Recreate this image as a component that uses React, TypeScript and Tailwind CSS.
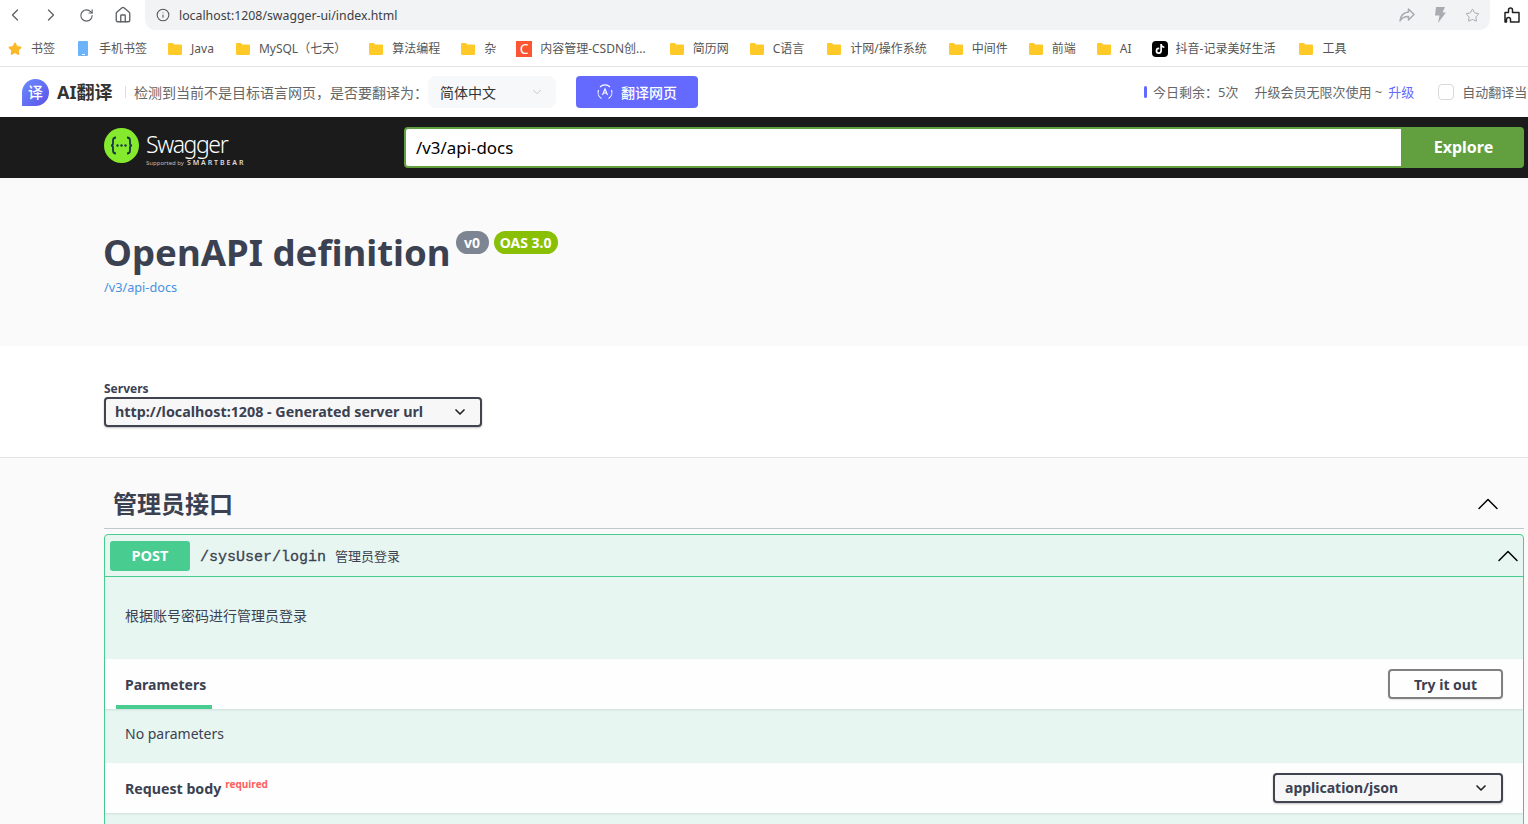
import React from 'react';
import { FaTiktok } from 'react-icons/fa';
import { ChevronDown, ChevronLeft, ChevronRight, ChevronUp, Home, Info, RotateCw, Star } from 'lucide-react';

const Folder = () => (
    <svg width="14" height="12" viewBox="0 0 14 12" className="shrink-0">
        <path d="M0 1.2C0 .5.5 0 1.2 0h3.6l1.5 1.6h6.5c.7 0 1.2.5 1.2 1.2v8c0 .7-.5 1.2-1.2 1.2H1.2C.5 12 0 11.500 0 10.800z" fill="#ffca28" />
    </svg>
);

const bookmarks = [
    { label: '书签', icon: <Star size={14} className="text-[#fbb829] fill-[#fbb829] shrink-0" />, cls: 'ml-[8px] gap-[9px]' },
    { label: '手机书签', icon: <div className="w-[10px] h-[15px] bg-[#6db3f9] rounded-[1px] shrink-0 mr-[2px] flex items-end justify-center"><div className="w-[3px] h-[1px] bg-white mb-[1px]" /></div>, cls: 'ml-[2px] gap-[9px]' },
    { label: 'Java', cls: 'gap-[9px]' },
    { label: 'MySQL（七天）', cls: 'ml-[1px] gap-[9px]' },
    { label: '算法编程', cls: 'gap-[9px] ml-[2px]' },
    { label: '杂', cls: 'gap-[9px]' },
    { label: '内容管理-CSDN创...', icon: <div className="w-[16px] h-[16px] bg-[#fc5531] text-white text-[14px] leading-[16px] text-center shrink-0">C</div>, cls: '-ml-[1px] gap-[8px]' },
    { label: '简历网', cls: 'ml-[3px] gap-[9px]' },
    { label: 'C语言', cls: 'gap-[9px]' },
    { label: '计网/操作系统', cls: 'ml-[2px] gap-[9px]' },
    { label: '中间件', cls: 'ml-[1px] gap-[9px]' },
    { label: '前端', cls: 'gap-[9px]' },
    { label: 'AI', cls: 'gap-[9px]' },
    { label: '抖音-记录美好生活', icon: <div className="w-[16px] h-[16px] bg-black rounded-[4px] flex items-center justify-center shrink-0"><FaTiktok className="text-white w-[10px] h-[10px]" /></div>, cls: '-ml-[1px] gap-[8px]' },
    { label: '工具', cls: 'ml-[3px] gap-[9px]' },
];

const SelectArrow = () => <ChevronDown size={16} strokeWidth={2.5} className="text-[#222] shrink-0" />;

const App = () => {
    return (
        <div className="h-[824px] overflow-hidden bg-white [font-family:'Noto_Sans','Noto_Sans_CJK_SC',sans-serif]">
            {/* Browser toolbar */}
            <div className="h-[30px] flex items-center text-[#5f6368]">
                <div className="w-[145px] flex items-center pl-[5px] gap-[12px] shrink-0">
                    <ChevronLeft size={20} strokeWidth={1.6} />
                    <ChevronRight size={20} strokeWidth={1.6} className="ml-[4px]" />
                    <RotateCw size={15} strokeWidth={1.8} className="ml-[6px]" />
                    <Home size={18} strokeWidth={1.8} className="ml-[8px]" />
                </div>
                <div className="w-[1345px] h-[30px] bg-[#f1f3f4] rounded-b-[10px] flex items-center pl-[11px] pr-[10px]">
                    <Info size={14} strokeWidth={1.8} className="text-[#555]" />
                    <span className="ml-[9px] mt-[2px] text-[12.3px] text-[#3c4043]">localhost:1208/swagger-ui/index.html</span>
                    <div className="ml-auto flex items-center text-[#a8abaf]">
                        <svg width="16" height="14" viewBox="0 0 16 14" fill="none" stroke="currentColor" strokeWidth="1.5"><path d="M9.500 1v3C4 4.500 1.500 8 1 13c1.800-3.400 4.500-4.500 8.500-4.500v3.500L15 6.500z" strokeLinejoin="round" /></svg>
                        <svg width="12" height="16" viewBox="0 0 12 16" fill="currentColor" className="ml-[19px]"><path d="M2 0h9L8.500 5.500H12L4 16l1.500-7.500H1z" /></svg>
                        <Star size={15} strokeWidth={1.6} className="ml-[19px]" />
                    </div>
                </div>
                <svg width="16" height="16" viewBox="0 0 16 16" fill="none" stroke="#222" strokeWidth="1.5" className="ml-[14px]"><path d="M1 5.500h3.500V3a2 2 0 0 1 4 0v2.500H15V15H6.500v-2.500a2 2 0 0 0-4 0V15H1z" strokeLinejoin="round" /></svg>
            </div>

            {/* Bookmarks */}
            <div className="h-[37px] pt-[1px] flex items-center gap-[21px] border-b border-[#e2e3e5] text-[12px] text-[#555] whitespace-nowrap">
                {bookmarks.map((b) => (
                    <div key={b.label} className={`flex items-center shrink-0 ${b.cls}`}>
                        {b.icon ?? <Folder />}
                        <span>{b.label}</span>
                    </div>
                ))}
            </div>

            {/* Translate bar */}
            <div className="h-[50px] flex items-center text-[13px] text-[#666] whitespace-nowrap overflow-hidden">
                <div className="ml-[22px] w-[27px] h-[27px] rounded-full rounded-bl-[6px] bg-gradient-to-br from-[#6d8cff] to-[#5a4fe8] text-white text-[15px] font-medium flex items-center justify-center shrink-0">译</div>
                <span className="ml-[8px] w-[55px] text-[18px] font-bold text-[#333] shrink-0">AI翻译</span>
                <div className="ml-[13px] w-px h-[12px] bg-[#ddd] shrink-0" />
                <span className="ml-[8px] mt-[1px] w-[285px] text-[14px] shrink-0">检测到当前不是目标语言网页，是否要翻译为：</span>
                <div className="ml-[9px] w-[128px] h-[32px] bg-[#f7f8fa] rounded-[8px] flex items-center pl-[12px] pr-[12px] text-[14px] text-[#333] shrink-0">
                    简体中文
                    <ChevronDown size={14} strokeWidth={1.4} className="ml-auto text-[#bbb]" />
                </div>
                <button className="ml-[20px] w-[122px] h-[32px] bg-[#6469ff] rounded-[4px] text-white text-[14px] font-medium flex items-center justify-center gap-[8px] shrink-0">
                    <svg width="16" height="16" viewBox="0 0 16 16" fill="none" stroke="#fff" strokeWidth="1.1"><path d="M3 3a7 7 0 0 1 10 0M14.500 6a7 7 0 0 1-3 8.500M4.500 14.500A7 7 0 0 1 1.500 6M5.500 11L8 5l2.500 6M6.500 9h3" /></svg>
                    翻译网页
                </button>
                <div className="ml-[446px] w-[3px] h-[12px] bg-[#6469ff] rounded-full shrink-0" />
                <span className="ml-[6px] mt-[1px] shrink-0">今日剩余：5次</span>
                <span className="ml-[16px] mt-[1px] shrink-0">升级会员无限次使用 ~</span>
                <span className="ml-[6px] mt-[1px] text-[#6469ff] shrink-0">升级</span>
                <div className="ml-[24px] w-[16px] h-[16px] rounded-[4px] border border-[#d9d9d9] shrink-0" />
                <span className="ml-[8px] mt-[1px] shrink-0">自动翻译当前网站</span>
            </div>

            {/* Swagger top bar */}
            <div className="h-[61px] bg-[#1b1b1b] flex items-center pl-[104px] pr-[4px]">
                <div className="w-[300px] h-[61px] pt-[11px] flex items-start gap-[7px] shrink-0">
                    <svg width="35" height="35" viewBox="0 0 35 35" className="shrink-0">
                        <circle cx="17.500" cy="17.500" r="17.500" fill="#85ea2d" />
                        <path d="M12 9.500c-2.500 0-3 1-3 3v3c0 1.300-.6 2-2 2 1.400 0 2 .7 2 2v3c0 2 .5 3 3 3M23 9.500c2.500 0 3 1 3 3v3c0 1.300.6 2 2 2-1.400 0-2 .7-2 2v3c0 2-.5 3-3 3" fill="none" stroke="#173647" strokeWidth="1.800" />
                        <circle cx="13.500" cy="17.500" r="1.200" fill="#173647" />
                        <circle cx="17.500" cy="17.500" r="1.200" fill="#173647" />
                        <circle cx="21.500" cy="17.500" r="1.200" fill="#173647" />
                    </svg>
                    <div className="flex flex-col text-white">
                        <span className="text-[23px] leading-[32px] font-light tracking-[-1.4px]">Swagger</span>
                        <div className="-mt-[2px] flex items-center gap-[3px] leading-[10px] whitespace-nowrap">
                            <span className="text-[6px] text-[#bbb]">Supported by</span>
                            <span className="text-[7px] font-semibold tracking-[1.9px] text-[#ddd]">SMARTBEAR</span>
                        </div>
                    </div>
                </div>
                <div className="flex-1 flex h-[41px]">
                    <div className="flex-1 bg-white border-2 border-[#62a03f] rounded-l-[4px] pl-[10px] flex items-center text-[16.9px] text-black">/v3/api-docs</div>
                    <button className="w-[121px] pb-[2px] bg-[#62a03f] rounded-r-[4px] text-white text-[16px] font-bold">Explore</button>
                </div>
            </div>

            {/* Info */}
            <div className="h-[168px] bg-[#fafafa] pl-[103px] pt-[49px] text-[#3b4151]">
                <div className="flex items-start">
                    <h1 className="text-[36.6px] leading-[50px] font-bold">OpenAPI definition</h1>
                    <span className="ml-[5px] mt-[4px] h-[23px] w-[33px] rounded-full bg-[#7d8492] text-white text-[14px] font-bold flex items-center justify-center">v0</span>
                    <span className="ml-[5px] mt-[4px] h-[23px] w-[64px] rounded-full bg-[#89bf04] text-white text-[14px] font-bold flex items-center justify-center">OAS 3.0</span>
                </div>
                <div className="mt-[1px] pl-[1px] text-[12.7px] leading-[18px] text-[#4990e2]">/v3/api-docs</div>
            </div>

            {/* Servers */}
            <div className="h-[112px] bg-white border-b border-[#e3e3e3] pl-[104px] pt-[35px] text-[#3b4151]">
                <div className="text-[12px] leading-[16px] font-bold">Servers</div>
                <div className="w-[378px] h-[30px] bg-[#f7f7f7] border-2 border-[#41444e] rounded-[4px] shadow-[0_1px_2px_rgba(0,0,0,0.25)] flex items-center pl-[9px] pr-[12px] pb-[1px] text-[14.3px] font-bold">
                    http://localhost:1208 - Generated server url
                    <span className="ml-auto"><SelectArrow /></span>
                </div>
            </div>

            {/* Tag section */}
            <div className="bg-[#fafafa] pl-[104px] pr-[4px] text-[#3b4151] h-full">
                <div className="h-[71px] flex items-center pl-[9px] pr-[18px] pt-[22px] border-b border-[#c5c6cb]">
                    <h3 className="text-[24px] font-bold">管理员接口</h3>
                    <ChevronUp size={36} strokeWidth={1} className="ml-auto text-black -my-[6px]" />
                </div>

                <div className="mt-[5px] border border-[#49cc90] rounded-[4px] bg-[#e7f6f0]">
                    <div className="h-[42px] flex items-center pl-[5px] border-b border-[#49cc90]">
                        <div className="w-[80px] h-[30px] bg-[#49cc90] rounded-[3px] text-white text-[14.5px] font-bold flex items-center justify-center">POST</div>
                        <span className="ml-[10px] mt-[6px] text-[15px] [-webkit-text-stroke:0.3px] [font-family:'Liberation_Mono',monospace]">/sysUser/login</span>
                        <span className="ml-[9px] mt-[2px] text-[13px]">管理员登录</span>
                        <ChevronUp size={36} strokeWidth={1} className="ml-auto -mr-[3px] text-black -my-[4px]" />
                    </div>

                    <div className="h-[82px] pl-[20px] pt-[29px] text-[14px] leading-[20px]">根据账号密码进行管理员登录</div>

                    <div className="h-[50px] flex items-end justify-between pl-[11px] pr-[20px] bg-[#fdfefd] shadow-[0_1px_2px_rgba(0,0,0,0.1)]">
                        <div className="w-[96px] h-[50px] border-b-4 border-[#49cc90] pl-[9px] pt-[16px] text-[14px] leading-[20px] font-bold">Parameters</div>
                        <button className="w-[115px] h-[30px] mb-[10px] border-2 border-[#808080] rounded-[4px] text-[14px] font-bold shadow-[0_1px_2px_rgba(0,0,0,0.1)]">Try it out</button>
                    </div>

                    <div className="h-[54px] pl-[20px] pb-[6px] flex items-center text-[14px]">No parameters</div>

                    <div className="h-[50px] flex items-center justify-between pl-[20px] pr-[20px] bg-[#fdfefd] shadow-[0_1px_2px_rgba(0,0,0,0.1)]">
                        <div className="flex items-start mt-[2px]">
                            <span className="text-[14.2px] font-bold">Request body</span>
                            <span className="ml-[4px] -mt-[1px] text-[10px] leading-[14px] font-bold text-[#ff6060]">required</span>
                        </div>
                        <div className="w-[230px] h-[30px] bg-[#f7f7f7] border-2 border-[#41444e] rounded-[4px] shadow-[0_1px_2px_rgba(0,0,0,0.25)] flex items-center pl-[10px] pr-[12px] pb-[1px] text-[14px] font-bold">
                            application/json
                            <span className="ml-auto"><SelectArrow /></span>
                        </div>
                    </div>

                    <div className="h-[60px]" />
                </div>
            </div>
        </div>
    );
};

export default App;
